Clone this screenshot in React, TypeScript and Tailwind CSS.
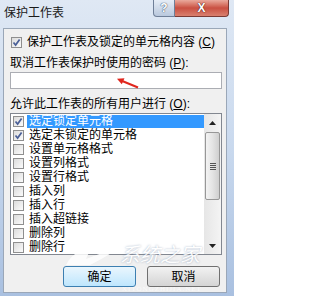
import React from "react";

const items: { label: string; checked?: boolean; selected?: boolean }[] = [
  { label: "选定锁定单元格", checked: true, selected: true },
  { label: "选定未锁定的单元格", checked: true },
  { label: "设置单元格格式" },
  { label: "设置列格式" },
  { label: "设置行格式" },
  { label: "插入列" },
  { label: "插入行" },
  { label: "插入超链接" },
  { label: "删除列" },
  { label: "删除行" },
];

function CheckBox({ checked }: { checked?: boolean }) {
  return (
    <div className="flex h-[11px] w-[11px] shrink-0 items-center justify-center border border-[#8f8f8f] bg-gradient-to-br from-[#dcdcdc] to-[#fbfbfb]">
      {checked && (
        <svg width="9" height="9" viewBox="0 0 9 9">
          <path d="M1.5 4.5 L3.6 7 L7.6 1.4" fill="none" stroke="#4a5f97" strokeWidth="1.7" />
        </svg>
      )}
    </div>
  );
}

function WinButton({ label, primary }: { label: string; primary?: boolean }) {
  return (
    <div
      className={
        primary
          ? "flex h-[21px] w-[73px] items-center justify-center rounded-[3px] border border-[#3c7fb1] bg-gradient-to-b from-[#eaf6fd] to-[#bee6fd] text-[12px] leading-[14px]"
          : "flex h-[21px] w-[73px] items-center justify-center rounded-[3px] border border-[#707070] bg-gradient-to-b from-[#f2f2f2] to-[#d4d4d4] text-[12px] leading-[14px]"
      }
    >
      {label}
    </div>
  );
}

export default function App() {
  return (
    <div className="relative flex h-[296px] w-[234px] flex-col overflow-hidden bg-gradient-to-b from-[#dfe8f4] via-[#c9d9ee] to-[#a9c0e0] font-['Liberation_Sans','Noto_Sans_CJK_SC',sans-serif] text-[#000]">
      {/* title bar */}
      <div className="flex h-[28px] shrink-0 items-start">
        <div className="pl-[4px] pt-[6px] text-[12px] leading-[14px] text-[#1a1a1a]">保护工作表</div>
        <div className="ml-auto mr-[5px] flex h-[17px]">
          <div className="flex w-[22px] items-center justify-center rounded-bl-[4px] border border-t-0 border-[#6f7f98] bg-gradient-to-b from-[#e6edf6] to-[#b9c8dd] text-[12px] font-bold leading-none text-white [text-shadow:0_0_1px_#3a4a66,0_0_1px_#3a4a66]">
            ?
          </div>
          <div className="flex w-[54px] items-center justify-center rounded-br-[4px] border border-l-0 border-t-0 border-[#7a3a34] bg-gradient-to-b from-[#e9a99c] via-[#c94f41] to-[#d9806f] text-[12px] font-bold leading-none text-white [text-shadow:0_0_1px_#4a1a16,0_0_1px_#4a1a16]">
            X
          </div>
        </div>
      </div>

      {/* body */}
      <div className="mb-[3px] ml-[3px] mr-[7px] flex flex-1 flex-col border border-[#9aa7b8] bg-[#f0f0f0] text-[12px] leading-[14px]">
        <div className="mt-[6px] flex h-[14px] items-center gap-[5px] pl-[7px]">
          <CheckBox checked />
          <span>
            保护工作表及锁定的单元格内容 (<span className="underline">C</span>)
          </span>
        </div>

        <div className="mt-[7px] pl-[6px]">
          取消工作表保护时使用的密码 (<span className="underline">P</span>):
        </div>

        <div className="relative ml-[6px] mt-[2px] h-[17px] w-[212px] border border-[#abadb3] bg-white">
          <svg className="absolute left-[105px] top-[4px]" width="24" height="12" viewBox="0 0 24 12">
            <path d="M22 10.5 L5 3.5" stroke="#e0261e" strokeWidth="2" />
            <path d="M1 1.8 L8.5 1.2 L5.8 7.2 Z" fill="#e0261e" />
          </svg>
        </div>

        <div className="mt-[8px] pl-[6px]">
          允许此工作表的所有用户进行 (<span className="underline">O</span>):
        </div>

        <div className="ml-[6px] mt-[2px] flex h-[142px] w-[212px] border border-[#828790] bg-white">
          <div className="flex flex-1 flex-col">
            {items.map((it) => (
              <div key={it.label} className="flex h-[14px] items-center pl-[2px]">
                <CheckBox checked={it.checked} />
                <div
                  className={
                    it.selected
                      ? "ml-[3px] flex h-[13px] flex-1 items-center bg-[#3399ff] pl-[2px] text-white"
                      : "ml-[3px] flex h-[13px] flex-1 items-center pl-[2px]"
                  }
                >
                  {it.label}
                </div>
              </div>
            ))}
          </div>
          {/* scrollbar */}
          <div className="flex w-[17px] flex-col bg-gradient-to-r from-[#e6e6e6] to-[#f4f4f4]">
            <div className="flex h-[17px] items-center justify-center">
              <svg width="7" height="4" viewBox="0 0 7 4">
                <path d="M0 4 L3.5 0 L7 4 Z" fill="#222" />
              </svg>
            </div>
            <div className="mx-[1px] mt-[1px] flex h-[68px] items-center justify-center rounded-[2px] border border-[#979797] bg-gradient-to-r from-[#f3f3f3] via-[#e4e4e4] to-[#cfcfcf]">
              <div className="flex w-[6px] flex-col gap-[1px]">
                <div className="h-[1px] bg-[#555]" />
                <div className="h-[1px] bg-[#555]" />
                <div className="h-[1px] bg-[#555]" />
                <div className="h-[1px] bg-[#555]" />
              </div>
            </div>
            <div className="mt-auto flex h-[17px] items-center justify-center">
              <svg width="7" height="4" viewBox="0 0 7 4">
                <path d="M0 0 L3.5 4 L7 0 Z" fill="#222" />
              </svg>
            </div>
          </div>
        </div>

        <div className="mt-[11px] flex justify-end gap-[11px] pr-[6px]">
          <WinButton label="确定" primary />
          <WinButton label="取消" />
        </div>
      </div>

      {/* watermark */}
      <div className="pointer-events-none absolute left-[62px] top-[239px] flex items-end opacity-85">
        <svg width="62" height="30" viewBox="0 0 62 30">
          <path d="M4 26 C10 14 22 8 36 6 C30 10 26 14 24 20 L40 14 C44 12 52 10 58 8 C50 14 40 20 28 26 Z" fill="#fff" />
        </svg>
        <span className="-ml-[4px] mb-[4px] font-['Noto_Sans_CJK_SC',sans-serif] text-[20px] italic leading-[22px] text-white [text-shadow:0_0_2px_rgba(120,140,170,0.8)]">
          系统之家
        </span>
      </div>
      <div className="pointer-events-none absolute left-[122px] top-[285px] font-['Liberation_Serif',serif] text-[7px] leading-[8px] tracking-[1px] text-white/70">
        XITONGZHIJIA.NET
      </div>
    </div>
  );
}
